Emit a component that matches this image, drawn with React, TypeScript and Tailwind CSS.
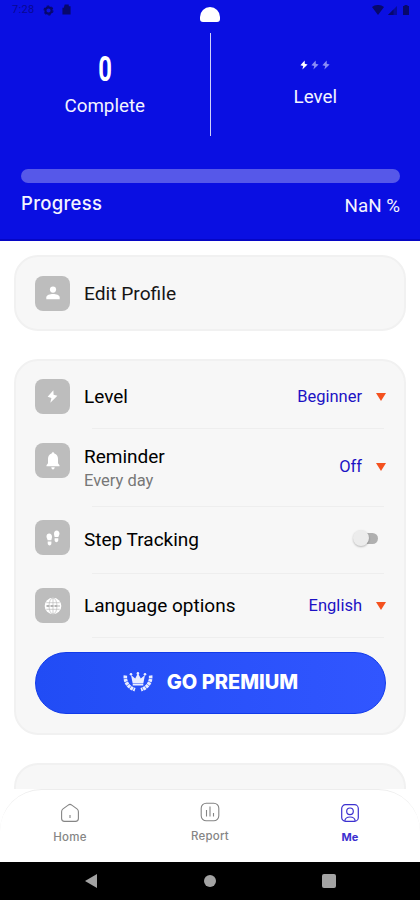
import type { ReactNode } from 'react'

interface IconProps {
    className?: string
}

interface SettingRowProps {
    icon: ReactNode
    title: string
    subtitle?: string
    rowClass: string
    iconClass: string
    titleClass: string
    children: ReactNode
}

interface NavItemProps {
    label: string
    icon: ReactNode
    customClass: string
    labelClass: string
}

const Bolt = ({ className }: IconProps) => (
    <svg viewBox="0 0 10 12" className={className} fill="currentColor">
        <path d="M5.8 0.3 0.5 6.2 4 7.3 3 11.7 9.5 5.4 6 4.3Z" />
    </svg>
)

const Person = () => (
    <svg viewBox="0 0 14 14" className="size-[14px]" fill="currentColor">
        <circle cx="7" cy="3.6" r="3.1" />
        <path d="M0.3 13.3V11.4C0.3 9.3 4 8.1 7 8.1s6.7 1.2 6.7 3.3v1.9Z" />
    </svg>
)

const Bell = () => (
    <svg viewBox="0 0 14 18" className="h-[18px] w-[14px]" fill="currentColor">
        <path d="M7 .2c.8 0 1.3.6 1.3 1.3 2.5.6 3.7 2.7 3.7 5.2v4.6l1.5 1.9v1.1H.5v-1.1L2 11.3V6.7c0-2.5 1.2-4.6 3.7-5.2C5.7.8 6.2.2 7 .2ZM5.3 15.2h3.4c0 1-.7 2.3-1.7 2.3s-1.7-1.3-1.7-2.3Z" />
    </svg>
)

const Steps = () => (
    <svg viewBox="0 0 14 16" className="h-[16px] w-[14px]" fill="currentColor">
        <path d="M3.2 3.5C5 3.5 6 5 6 7c0 1.2-.5 2-.6 3.2H1.6C1.5 9 .5 8.2.5 6.6c0-1.8 1-3.1 2.7-3.1ZM1.7 11.4h3.7v1.8c0 1.3-.7 2.2-1.8 2.2s-1.9-.9-1.9-2.2Z" />
        <path d="M10.7.4c1.7 0 2.8 1.4 2.8 3.2 0 1.5-1 2.4-1.1 3.5H8.6C8.5 5.9 8 5.1 8 3.9c0-2 .9-3.5 2.7-3.5ZM8.6 8.2h3.7V10c0 1.3-.8 2.2-1.9 2.2S8.6 11.3 8.6 10Z" />
    </svg>
)

const Globe = () => (
    <svg viewBox="0 0 18 18" className="size-[18px]">
        <circle cx="9" cy="9" r="8.3" fill="#fff" />
        <g fill="none" stroke="#bcbcbc" strokeWidth="0.7">
            <path d="M2.3 5.7h13.4M2.3 12.3h13.4M9 1v16" />
            <ellipse cx="9" cy="9" rx="4" ry="8" />
        </g>
        <path d="M2.5 9h13" stroke="#b4b4b4" strokeWidth="2" strokeDasharray="3 1" />
    </svg>
)

const Crown = () => (
    <svg viewBox="0 0 30 20" className="h-[20px] w-[30px]" fill="#e9edff">
        <path d="M8 3.1 12.2 6.5 14.9 1.3 17.8 6.5 22 3.1 20.3 11.5H9.7ZM9.7 12h10.6v1.4H9.7Z" />
        <circle cx="8" cy="2.3" r="1.3" />
        <circle cx="14.9" cy="1.4" r="1.3" />
        <circle cx="22" cy="2.3" r="1.3" />
        <g fill="none" stroke="#e9edff" strokeWidth="3.6" strokeDasharray="2.9 0.5">
            <path d="M2.4 3.5C1.7 9.5 5 15.5 12 17.7" />
            <path d="M27.6 3.5C28.3 9.5 25 15.5 18 17.7" />
        </g>
    </svg>
)

const HomeIcon = () => (
    <svg viewBox="0 0 20 20" className="size-5" fill="none" stroke="currentColor" strokeWidth="1.1">
        <path d="M8.2 2.1 3 5.9C2 6.7 1.6 7.5 1.6 8.7v6.8c0 1.8 1.1 2.9 2.9 2.9h11c1.8 0 2.9-1.1 2.9-2.9V8.7c0-1.2-.4-2-1.4-2.8l-5.2-3.8c-1.2-.9-2.4-.9-3.6 0Z" />
        <path d="M10 12v3" />
    </svg>
)

const ReportIcon = () => (
    <svg viewBox="0 0 20 20" className="size-5" fill="none" stroke="currentColor" strokeWidth="1.1">
        <rect x="1.2" y="1.2" width="17.6" height="17.6" rx="5" />
        <path d="M6.5 8v6.5M10 4.5v10M13.5 11v3.5" />
    </svg>
)

const MeIcon = () => (
    <svg viewBox="0 0 20 20" className="size-5" fill="none" stroke="currentColor" strokeWidth="1.2">
        <rect x="1.7" y="1.7" width="16.6" height="16.6" rx="3.8" />
        <circle cx="10" cy="8.3" r="3.3" />
        <path d="M4.8 18c.3-2.8 2.5-4 5.2-4s4.9 1.2 5.2 4" />
    </svg>
)

const IconTile = ({ children, customClass = '' }: { children: ReactNode; customClass?: string }) => (
    <div
        className={`flex size-[35px] shrink-0 items-center justify-center rounded-lg bg-[#bdbdbd] text-white ${customClass}`}
    >
        {children}
    </div>
)

const Select = ({ value, customClass }: { value: string; customClass: string }) => (
    <div className={`-mr-px flex items-center text-[#1c12c4] ${customClass}`}>
        <span className="text-[16.5px] leading-5">{value}</span>
        <svg viewBox="0 0 10 8" className="mb-px ml-[14px] h-2 w-[10px]" fill="#f4511e">
            <path d="M0 0h10L5 8Z" />
        </svg>
    </div>
)

const SettingRow = ({
    icon,
    title,
    subtitle,
    rowClass,
    iconClass,
    titleClass,
    children,
}: SettingRowProps) => {
    return (
        <div className={`flex flex-col ${rowClass}`}>
            <div className="flex flex-1 items-start">
                <IconTile customClass={iconClass}>{icon}</IconTile>
                <div className={`ml-[14px] flex-1 ${titleClass}`}>
                    <p className="text-[19px] leading-6 text-black">{title}</p>
                    {subtitle && <p className="text-[16.5px] leading-6 text-[#777]">{subtitle}</p>}
                </div>
                {children}
            </div>
            <div className="ml-[57px] mr-px h-px bg-[#eeeeee]" />
        </div>
    )
}

const NavItem = ({ label, icon, customClass, labelClass }: NavItemProps) => (
    <div className={`flex flex-1 flex-col items-center ${customClass}`}>
        {icon}
        <span className={`font-[Inter] leading-4 ${labelClass}`}>{label}</span>
    </div>
)

const StatusBar = () => (
    <div className="flex h-[22px] items-start px-3 pt-[4px] text-[#07086c]">
        <span className="w-[31px] text-[11px] leading-3 tracking-[0.3px] text-[#080894]">7:28</span>
        <svg viewBox="0 0 12 12" className="mt-px size-[11px]" fill="none" stroke="currentColor">
            <circle cx="6" cy="6" r="3.4" strokeWidth="2.3" />
            <circle cx="6" cy="6" r="4.9" strokeWidth="1.2" strokeDasharray="2.6 2.53" />
        </svg>
        <svg viewBox="0 0 10 11" className="ml-[8px] h-[11px] w-[9px]" fill="currentColor">
            <path d="M3 0h4.5v2h2v9h-9V3.5H2Z" />
        </svg>
        <div className="flex flex-1 justify-center pr-[24px] pt-[3px]">
            <div className="h-[15px] w-5 rounded-t-[10px] rounded-b-[3px] bg-white" />
        </div>
        <svg viewBox="0 0 12 10" className="mr-px mt-px h-[10px] w-3" fill="currentColor">
            <path d="M0 2C3.500-.7 8.500-.7 12 2L6 10Z" />
        </svg>
        <svg viewBox="0 0 9 9" className="ml-[3px] mt-[2px] size-[9px]" fill="currentColor">
            <path d="M0 9 9 0v9Z" opacity="0.6" />
            <path d="M0 9 5.5 3.5V9Z" />
        </svg>
        <svg viewBox="0 0 6 10" className="-mr-px ml-[6px] mt-px h-[10px] w-[6px]" fill="currentColor">
            <path d="M1.5 0h3v1H6v9H0V1h1.5Z" />
        </svg>
    </div>
)

const Header = () => (
    <header className="h-[241px] border-b-2 border-[#0606c4] bg-[#0a0fe2] text-[#f4f4ff]">
        <StatusBar />
        <div className="flex pt-[11px]">
            <div className="flex flex-1 flex-col items-center pt-[19px]">
                <span className="scale-x-[0.68] text-[35px] font-bold leading-9 text-white">0</span>
                <span className="mt-[6px] text-[18.8px] leading-6">Complete</span>
            </div>
            <div className="h-[103px] w-px bg-[#cfd0fb]" />
            <div className="flex flex-1 flex-col items-center pt-[27px]">
                <div className="flex gap-[3px]">
                    <Bolt className="h-[10px] w-2 text-white" />
                    <Bolt className="h-[10px] w-2 text-[#8a8cf5]" />
                    <Bolt className="h-[10px] w-2 text-[#8a8cf5]" />
                </div>
                <span className="mt-[15px] text-[18.8px] leading-6">Level</span>
            </div>
        </div>
        <div className="ml-[21px] mr-5 mt-[33px] h-[14px] rounded-full bg-[#5658e9]" />
        <div className="ml-[21px] mr-5 flex items-start justify-between pt-[8px]">
            <span className="font-[Inter] text-[18.5px] font-medium leading-6 tracking-[0.3px]">Progress</span>
            <span className="pt-[3px] text-[18.8px] leading-6">NaN %</span>
        </div>
    </header>
)

export default function App() {
    return (
        <div className="flex h-[900px] w-[420px] flex-col overflow-hidden bg-white font-[Roboto,sans-serif] text-[#151515]">
            <Header />

            <main className="flex h-[548px] shrink-0 flex-col px-[14px] pt-[14px]">
                <div className="flex h-[76px] shrink-0 items-center rounded-[24px] border-2 border-[#f1f1f1] bg-[#f7f7f7] pl-[19px]">
                    <IconTile>
                        <Person />
                    </IconTile>
                    <p className="ml-[14px] pt-px text-[19.2px] leading-6">Edit Profile</p>
                </div>

                <div className="mt-[28px] h-[376px] shrink-0 rounded-[24px] border-2 border-[#f1f1f1] bg-[#f7f7f7] px-[19px]">
                    <SettingRow
                        icon={<Bolt className="h-[13px] w-[11px]" />}
                        title="Level"
                        rowClass="h-[68px]"
                        iconClass="mt-[18px]"
                        titleClass="pt-[24px]"
                    >
                        <Select value="Beginner" customClass="pt-[26px]" />
                    </SettingRow>
                    <SettingRow
                        icon={<Bell />}
                        title="Reminder"
                        subtitle="Every day"
                        rowClass="h-[78px]"
                        iconClass="mt-[14px]"
                        titleClass="pt-[16px]"
                    >
                        <Select value="Off" customClass="pt-[28px]" />
                    </SettingRow>
                    <SettingRow
                        icon={<Steps />}
                        title="Step Tracking"
                        rowClass="h-[67px]"
                        iconClass="mt-[13px]"
                        titleClass="pt-[21px]"
                    >
                        <div className="mr-[7px] mt-[23px] flex items-center">
                            <div className="z-10 size-4 rounded-full bg-[#ececec] shadow-[0_1px_2px_rgba(0,0,0,0.25)]" />
                            <div className="ml-[-7px] h-[11px] w-4 rounded-full bg-[#b0b0b0]" />
                        </div>
                    </SettingRow>
                    <SettingRow
                        icon={<Globe />}
                        title="Language options"
                        rowClass="h-[64px]"
                        iconClass="mt-[14px]"
                        titleClass="pt-[20px]"
                    >
                        <Select value="English" customClass="pt-[22px]" />
                    </SettingRow>

                    <button className="mt-[14px] flex h-[62px] w-[351px] items-center justify-center rounded-full border border-[#123bea] bg-linear-to-r from-[#214cf5] to-[#3156ff] pb-[2px] text-white">
                        <Crown />
                        <span className="ml-[14px] font-[Inter] text-[20px] font-extrabold">GO PREMIUM</span>
                    </button>
                </div>

                <div className="mt-[28px] flex-1 rounded-t-[24px] border-2 border-b-0 border-[#f1f1f1] bg-[#f7f7f7]" />
            </main>

            <nav className="z-10 flex h-[73px] shrink-0 rounded-t-[42px] border-t border-[#ededed] bg-white text-[#858585]">
                <NavItem
                    label="Home"
                    icon={<HomeIcon />}
                    customClass="pt-[13px]"
                    labelClass="mt-[6px] text-[11.5px] font-medium tracking-[0.3px]"
                />
                <NavItem
                    label="Report"
                    icon={<ReportIcon />}
                    customClass="pt-[12px]"
                    labelClass="mt-[6px] text-[11.5px] font-medium tracking-[0.2px]"
                />
                <NavItem
                    label="Me"
                    icon={<MeIcon />}
                    customClass="pt-[13px] text-[#3c30d0]"
                    labelClass="mt-[6px] text-[11px] font-bold"
                />
            </nav>

            <footer className="flex h-[38px] shrink-0 items-center justify-between bg-black pl-[85px] pr-[84px] text-[#a3a3a3]">
                <svg viewBox="0 0 12 14" className="h-[14px] w-3" fill="currentColor">
                    <path d="M12 0v14L0 7Z" />
                </svg>
                <div className="size-3 rounded-full bg-[#a3a3a3]" />
                <div className="size-[14px] rounded-[2px] bg-[#a3a3a3]" />
            </footer>
        </div>
    )
}
